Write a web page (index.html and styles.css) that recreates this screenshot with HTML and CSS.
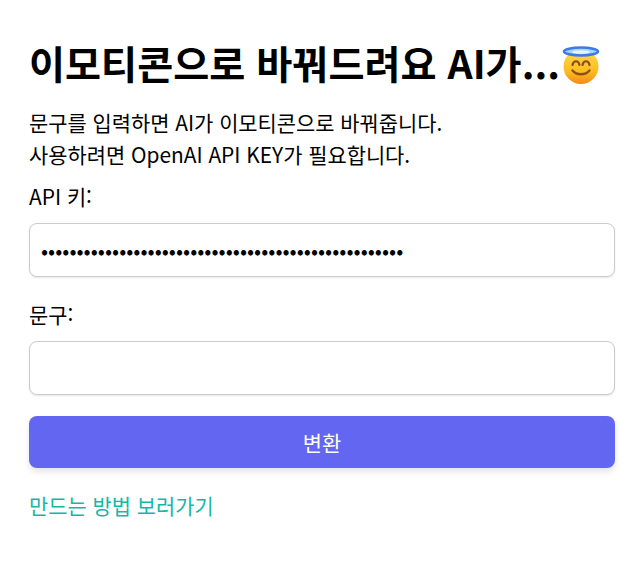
FILE: index.html
```html
<!DOCTYPE html>
<html lang="ko">
<head>
  <meta charset="UTF-8">
  <meta name="viewport" content="width=device-width, initial-scale=1.0">
  <title>이모티콘으로 바꿔드려요</title>
  <link rel="stylesheet" href="styles.css">
</head>
<body>
  <div class="container">
    <h1 class="title">이모티콘으로 바꿔드려요 AI가...<svg class="emoji" viewBox="0 0 40 44" aria-label="halo">
        <defs>
          <linearGradient id="face" x1="0" y1="0" x2="0" y2="1">
            <stop offset="0" stop-color="#ffdc50"/>
            <stop offset="0.65" stop-color="#fcbc1e"/>
            <stop offset="1" stop-color="#f3891c"/>
          </linearGradient>
        </defs>
        <circle cx="20" cy="25.5" r="17.5" fill="url(#face)"/>
        <path d="M11.5 24c1-5 6-5 7 0M21.5 24c1-5 6-5 7 0" fill="none" stroke="#8a5312" stroke-width="2.2" stroke-linecap="round"/>
        <path d="M11.5 29.5c4 5 13 5 17 0" fill="none" stroke="#8a5312" stroke-width="2.4" stroke-linecap="round"/>
        <ellipse cx="20" cy="10.5" rx="17" ry="4" fill="#9fd8f0" stroke="#3f78ee" stroke-width="2.6"/>
        <ellipse cx="20" cy="11" rx="9" ry="1.8" fill="#e8f4f0"/>
      </svg></h1>
    <p class="desc">문구를 입력하면 AI가 이모티콘으로 바꿔줍니다.<br>사용하려면 OpenAI API KEY가 필요합니다.</p>
    <form onsubmit="return false">
      <label class="field-label" for="apikey">API 키:</label>
      <input class="field-input" type="password" id="apikey" value="sk-aaaaaaaaaaaaaaaaaaaaaaaaaaaaaaaaaaaaaaaaaaaaaaaa">
      <label class="field-label" for="phrase">문구:</label>
      <input class="field-input" type="text" id="phrase">
      <button class="submit-btn" type="submit">변환</button>
    </form>
    <a class="howto" href="#">만드는 방법 보러가기</a>
  </div>
</body>
</html>
```
FILE: styles.css
```css
body {
  margin: 0;
  background-color: #fff;
  color: #000;
  font-family: "Noto Sans CJK KR", "Noto Sans", sans-serif;
}

.container {
  padding: 32px 25px 0 29px;
}

.title {
  margin: 0;
  font-size: 39.2px;
  line-height: 60px;
  font-weight: 700;
  white-space: nowrap;
}

.emoji {
  width: 40px;
  height: 44px;
  vertical-align: -6px;
  margin-left: 1px;
}

.desc {
  margin: 14px 0 0;
  font-size: 20.9px;
  line-height: 32px;
}

.field-label {
  display: block;
  margin-top: 10px;
  font-size: 20.9px;
  line-height: 33px;
}

.field-input {
  display: block;
  box-sizing: border-box;
  width: 100%;
  height: 54px;
  margin: 10px 0 21px;
  padding: 0 11px;
  border: 1px solid #ccc;
  border-radius: 8px;
  box-shadow: 0 1px 2px rgba(0, 0, 0, 0.1);
  background-color: #fff;
  font-size: 20.9px;
  font-family: inherit;
}

.submit-btn {
  display: block;
  width: 100%;
  height: 52px;
  margin-top: 21px;
  border: none;
  border-radius: 8px;
  background-color: #6366f1;
  color: #fff;
  font-size: 20.9px;
  font-family: inherit;
  box-shadow: 0 4px 6px rgba(0, 0, 0, 0.1);
}

.howto {
  display: block;
  margin-top: 20px;
  font-size: 20.9px;
  line-height: 34px;
  color: #14b8a6;
  text-decoration: none;
}
```
